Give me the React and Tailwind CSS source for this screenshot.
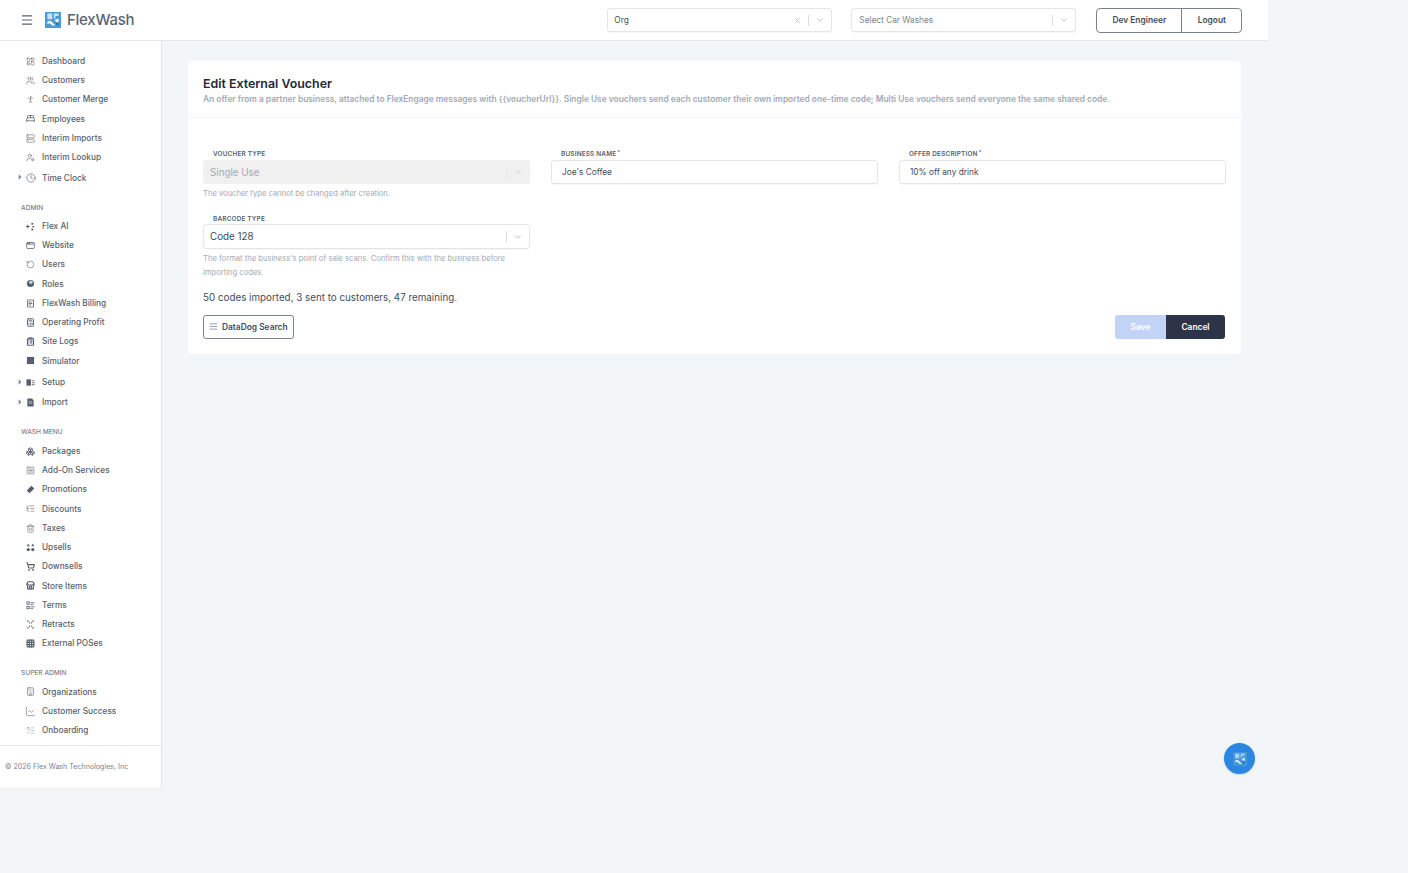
import React from 'react';
import {
  Menu, LayoutDashboard, Users, PersonStanding, BedDouble, Server, UserSearch, Clock, AppWindow, RotateCcw,
  ReceiptText, Calculator, ClipboardList, Boxes, SquareMenu, ListTree, Trash2,
  ShoppingCart, Store, Grid3x3, Building, ChartLine, ListTodo, ChevronDown, X, AlignJustify,
} from 'lucide-react';

const Logo = ({ className }) => (
  <svg viewBox="0 0 20 20" className={className}>
    <rect x="0" y="0" width="20" height="20" fill="#4a9bd8" />
    <path d="M3 2h6v7H3zM11 2h6v3h-4v3h-2z" fill="#c9e3f5" />
    <path d="M3 12l4-1 6 6H9l-3-3-3 1zM12 10l5-2v4l-2 1z" fill="#fff" />
    <path d="M13 13l4 1v3h-2z" fill="#2a6fa8" />
  </svg>
);

// small hand drawn icons where lucide has nothing close
const FlexAi = ({ className }) => (
  <svg viewBox="0 0 10 10" className={className} fill="currentColor">
    <path d="M0 5h4M2 3v4" stroke="currentColor" strokeWidth="1.1" />
    <rect x="6" y="1" width="2" height="2" /><rect x="7" y="4.5" width="2" height="1.5" /><rect x="6" y="7.5" width="2" height="2" />
  </svg>
);
const Roles = ({ className }) => (
  <svg viewBox="0 0 10 10" className={className}>
    <circle cx="5" cy="5" r="4" fill="currentColor" />
    <path d="M5 1.5l3 2-2 2-3-1z" fill="#fff" opacity=".75" />
  </svg>
);
const Promo = ({ className }) => (
  <svg viewBox="0 0 10 10" className={className} fill="currentColor">
    <path d="M6 0.8l3.2 3.2-5.2 5.2-3.2-3.2z" />
  </svg>
);
const Upsell = ({ className }) => (
  <svg viewBox="0 0 10 10" className={className} fill="currentColor">
    <path d="M2.5 0.5l1.6 3H0.9zM7.5 0.5l1.6 3H5.9z" />
    <circle cx="2.5" cy="7.3" r="1.8" /><circle cx="7.5" cy="7.3" r="1.8" />
  </svg>
);
const Setup = ({ className }) => (
  <svg viewBox="0 0 10 10" className={className} fill="currentColor">
    <rect x="0.5" y="1.5" width="5" height="7" />
    <path d="M6.5 2.5h3v1h-3zM6.5 4.5h3v1h-3zM6.5 6.5h3v1.5h-3z" opacity=".7" />
  </svg>
);
const ImportIcon = ({ className }) => (
  <svg viewBox="0 0 10 10" className={className} fill="currentColor">
    <path d="M1.5 0.5h5l2 2v7h-7z" />
    <path d="M3 4h4v.8H3zM3 6h4v.8H3z" fill="#fff" opacity=".8" />
  </svg>
);
const Simulator = ({ className }) => (
  <svg viewBox="0 0 10 10" className={className} fill="currentColor"><rect x="1" y="1" width="8" height="8" /></svg>
);
const Retract = ({ className }) => (
  <svg viewBox="0 0 10 10" className={className} fill="none" stroke="currentColor" strokeWidth="1">
    <path d="M1 1c2 0 3 1 3 3M9 1C7 1 6 2 6 4M1 9c2 0 3-1 3-3M9 9C7 9 6 8 6 6" />
  </svg>
);
const Terms = ({ className }) => (
  <svg viewBox="0 0 10 10" className={className} fill="none" stroke="currentColor" strokeWidth=".9">
    <rect x="1" y="1" width="2.6" height="2.6" /><rect x="1" y="6" width="2.6" height="2.6" />
    <path d="M5 2h4.5M5 4h3M5 6.5h4.5M5 8.5h3" />
  </svg>
);

const NavRow = ({ icon: Icon, label, caret, stroke = 1.5, size = 9, faint, className = '' }) => (
  <div className={`relative flex items-center pl-[26px] ${caret ? 'h-[20px]' : 'h-[19.25px]'} ${className}`}>
    {caret && (
      <svg viewBox="0 0 6 8" className="absolute left-[18px] top-[6px] w-[4px] h-[6px]">
        <path d="M1 0l4 4-4 4z" fill="#7b8290" />
      </svg>
    )}
    <span className="w-[9px] flex items-center justify-center shrink-0">
      <Icon size={size} strokeWidth={stroke} className={`shrink-0 ${faint ? 'text-[#9aa1ab]' : 'text-[#565f6d]'}`} style={{ width: size, height: size }} />
    </span>
    <span className="ml-[7px] text-[8.25px] font-medium text-[#565f6d] whitespace-nowrap">{label}</span>
  </div>
);

const SectionLabel = ({ children, className }) => (
  <div className={`pl-[21px] text-[6.6px] font-medium uppercase text-[#7b8290] leading-[10px] ${className}`}>{children}</div>
);

const FieldLabel = ({ children, required, className }) => (
  <div className={`text-[6.4px] font-semibold uppercase tracking-[0.2px] text-[#565f6d] leading-[8px] h-[10px] ${className}`}>
    {children}{required && <sup className="text-[5px] ml-px">*</sup>}
  </div>
);

const SelectBox = ({ value, placeholder, clear, disabled, big, className }) => (
  <div className={`flex items-center rounded-[3px] border ${disabled ? 'bg-[#f0f0f0] border-[#f0f0f0]' : 'bg-white border-[#e2e5e9] shadow-[0_1px_1px_rgba(0,0,0,0.03)]'} ${className}`}>
    <span className={`flex-1 whitespace-nowrap ${big ? 'text-[9.8px] pt-[2px]' : 'text-[8.3px]'} ${placeholder ? 'pl-[7px]' : 'pl-[6px]'} ${disabled ? 'text-[#a3a9b4]' : placeholder ? 'text-[#7b8290]' : 'text-[#444c5a]'}`}>
      {value}
    </span>
    {clear && <X size={9} className="text-[#b6bcc4] mr-[6px]" />}
    <span className={`w-px h-[11px] ${disabled ? 'bg-[#e8e8e8]' : 'bg-[#d9dde2]'}`}></span>
    <ChevronDown size={10} className={`mx-[6px] ${disabled ? 'text-[#c8ccd0]' : 'text-[#a9b0b8]'}`} />
  </div>
);

const TextBox = ({ value }) => (
  <div className="flex items-center h-[24px] rounded-[3px] border border-[#e2e5e9] shadow-[0_1px_1px_rgba(0,0,0,0.03)] bg-white pl-[10px] text-[8.3px] text-[#444c5a]">{value}</div>
);

export default function App() {
  return (
    <div className="w-[1408px] h-[873px] bg-[#f2f6f9] overflow-hidden font-['Inter',sans-serif] relative">
      <div className="w-[1268px]">
        <header className="h-[41px] bg-white border-b border-[#e5e7eb] flex items-center">
          <Menu size={14} className="ml-[20px] text-[#565f6d]" />
          <Logo className="ml-[11px] w-[16px] h-[16px]" />
          <span className="ml-[6px] text-[15px] font-medium tracking-[-0.25px] text-[#5b6472]">FlexWash</span>
          <SelectBox value="Org" clear className="ml-[473px] w-[225px] h-[24px]" />
          <SelectBox value="Select Car Washes" placeholder className="ml-[19px] w-[225px] h-[24px]" />
          <div className="ml-[20px] flex h-[25px] rounded-[4px] border border-[#7b8290] bg-white text-[8.4px] font-semibold text-[#444c5a]">
            <span className="w-[85px] flex items-center justify-center border-r border-[#7b8290]">Dev Engineer</span>
            <span className="w-[59px] flex items-center justify-center">Logout</span>
          </div>
        </header>

        <div className="flex items-start">
          <aside className="w-[162px] h-[746px] bg-white border-r border-[#dfe4ea] flex flex-col shrink-0">
            <div className="flex-1 pt-[10.5px]">
              <NavRow icon={LayoutDashboard} label="Dashboard" />
              <NavRow icon={Users} label="Customers" />
              <NavRow icon={PersonStanding} label="Customer Merge" />
              <NavRow icon={BedDouble} label="Employees" stroke={2} />
              <NavRow icon={Server} label="Interim Imports" />
              <NavRow icon={UserSearch} label="Interim Lookup" />
              <NavRow icon={Clock} label="Time Clock" caret size={10} className="mt-[1px]" />
              <SectionLabel className="mt-[14.5px] mb-[4px]">Admin</SectionLabel>
              <NavRow icon={FlexAi} label="Flex AI" />
              <NavRow icon={AppWindow} label="Website" stroke={2} />
              <NavRow icon={RotateCcw} label="Users" />
              <NavRow icon={Roles} label="Roles" />
              <NavRow icon={ReceiptText} label="FlexWash Billing" stroke={2.2} />
              <NavRow icon={Calculator} label="Operating Profit" stroke={2.4} />
              <NavRow icon={ClipboardList} label="Site Logs" stroke={3} />
              <NavRow icon={Simulator} label="Simulator" />
              <NavRow icon={Setup} label="Setup" caret className="mt-[2px]" />
              <NavRow icon={ImportIcon} label="Import" caret />
              <SectionLabel className="mt-[14px] mb-[5px]">Wash Menu</SectionLabel>
              <NavRow icon={Boxes} label="Packages" stroke={2.2} />
              <NavRow icon={SquareMenu} label="Add-On Services" />
              <NavRow icon={Promo} label="Promotions" />
              <NavRow icon={ListTree} label="Discounts" />
              <NavRow icon={Trash2} label="Taxes" />
              <NavRow icon={Upsell} label="Upsells" />
              <NavRow icon={ShoppingCart} label="Downsells" stroke={3} />
              <NavRow icon={Store} label="Store Items" stroke={3} />
              <NavRow icon={Terms} label="Terms" />
              <NavRow icon={Retract} label="Retracts" />
              <NavRow icon={Grid3x3} label="External POSes" stroke={3} />
              <SectionLabel className="mt-[15px] mb-[4px]">Super Admin</SectionLabel>
              <NavRow icon={Building} label="Organizations" />
              <NavRow icon={ChartLine} label="Customer Success" size={11} stroke={1.2} />
              <NavRow icon={ListTodo} label="Onboarding" faint />
            </div>
            <div className="h-[42px] border-t border-[#e5e7eb] pl-[5px] pt-[2px] flex items-center text-[7.1px] text-[#7b8290]">
              © 2026 Flex Wash Technologies, Inc
            </div>
          </aside>

          <main className="flex-1 pl-[26px] pr-[27px] pt-[20px]">
            <section className="bg-white rounded-[3px] shadow-[0_0_1px_rgba(0,0,0,0.06)] h-[293px]">
              <div className="h-[57px] border-b border-[#f3f4f6] px-[15px] pt-[16px]">
                <h1 className="text-[12.4px] leading-[14px] font-semibold text-[#1f2937]">Edit External Voucher</h1>
                <p className="mt-[3px] text-[8.4px] leading-[11px] font-semibold text-[#a3a9b4] whitespace-nowrap">
                  An offer from a partner business, attached to FlexEngage messages with {'{{voucherUrl}}'}. Single Use vouchers send each customer their own imported one-time code; Multi Use vouchers send everyone the same shared code.
                </p>
              </div>
              <div className="px-[15px] pt-[32px]">
                <div className="grid grid-cols-[327px_327px_327px] gap-x-[21px]">
                  <div>
                    <FieldLabel className="pl-[10px]">Voucher Type</FieldLabel>
                    <SelectBox value="Single Use" disabled big className="h-[24px]" />
                    <p className="mt-[5px] text-[7.6px] leading-[10px] text-[#a3a9b4]">The voucher type cannot be changed after creation.</p>
                  </div>
                  <div>
                    <FieldLabel required className="pl-[10px]">Business Name</FieldLabel>
                    <TextBox value="Joe's Coffee" />
                  </div>
                  <div>
                    <FieldLabel required className="pl-[10px]">Offer Description</FieldLabel>
                    <TextBox value="10% off any drink" />
                  </div>
                </div>
                <div className="w-[327px] mt-[16px]">
                  <FieldLabel className="pl-[10px]">Barcode Type</FieldLabel>
                  <SelectBox value="Code 128" big className="h-[25px] -mt-[1px]" />
                  <p className="mt-[3px] text-[7.62px] leading-[14.4px] text-[#a3a9b4]">
                    The format the business's point of sale scans. Confirm this with the business before importing codes.
                  </p>
                </div>
                <p className="mt-[10px] text-[9.82px] leading-[13px] text-[#444c5a]">50 codes imported, 3 sent to customers, 47 remaining.</p>
                <div className="mt-[11px] flex items-center justify-between pr-[1px]">
                  <button className="flex items-center h-[24px] w-[91px] rounded-[3px] border border-[#7b8290] bg-white pl-[5px] text-[8.4px] font-semibold text-[#444c5a]">
                    <AlignJustify size={9} className="text-[#7b8290] mr-[4px]" />
                    DataDog Search
                  </button>
                  <div className="flex h-[24px] text-[8.4px] font-semibold">
                    <span className="w-[51px] flex items-center justify-center rounded-l-[3px] bg-[#c3d3f7] text-white">Save</span>
                    <span className="w-[59px] flex items-center justify-center rounded-r-[3px] bg-[#2d3448] text-white">Cancel</span>
                  </div>
                </div>
              </div>
            </section>
          </main>
        </div>
      </div>
      <button className="absolute left-[1224px] top-[743px] w-[31px] h-[31px] rounded-full bg-[#2a86e0] flex items-center justify-center shadow-sm">
        <Logo className="w-[14px] h-[14px] opacity-80" />
      </button>
    </div>
  );
}
